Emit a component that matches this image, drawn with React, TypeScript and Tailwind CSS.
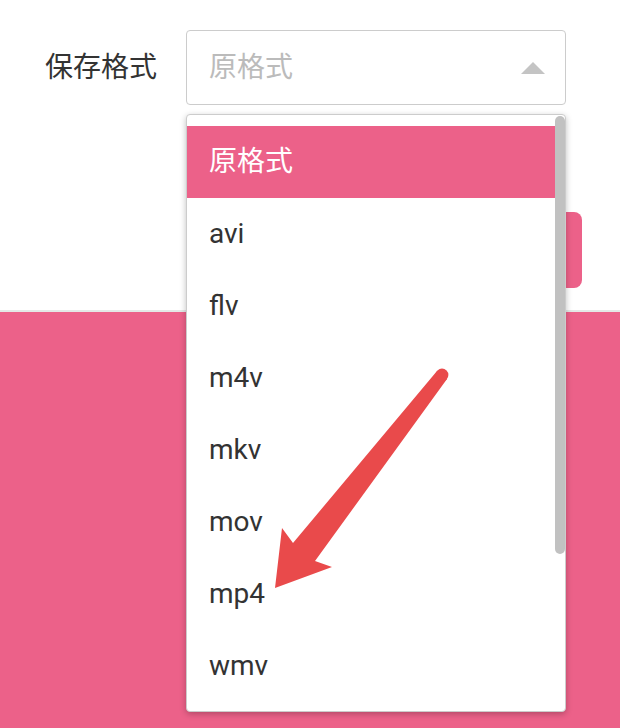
import React from "react";

const items = ["原格式", "avi", "flv", "m4v", "mkv", "mov", "mp4", "wmv"];

export default function App() {
  return (
    <div
      className="relative w-[620px] h-[728px] overflow-hidden bg-[#ec6189]"
      style={{ fontFamily: 'Roboto, "Noto Sans CJK SC", sans-serif' }}
    >
      <div className="h-[312px] bg-white border-b-2 border-[#e4e9e7] pt-[30px]">
        <div className="flex items-center pl-[45px]">
          <div className="w-[141px] text-[28px] leading-none text-[#333333]">保存格式</div>
          <div className="w-[380px] h-[75px] border-[1.5px] border-[#cccccc] rounded-[4px] flex items-center justify-between pl-[22px] pr-[20px]">
            <span className="text-[28px] leading-none text-[#bbbbbb]">原格式</span>
            <span className="w-0 h-0 border-l-[12px] border-r-[12px] border-b-[12px] border-l-transparent border-r-transparent border-b-[#c4c4c4]" />
          </div>
        </div>
        <div className="ml-[186px] mt-[107px] w-[396px] h-[76px] rounded-[8px] bg-[#ec6189]" />
      </div>

      <div className="absolute left-[186px] top-[114px] w-[380px] h-[598px] bg-white border border-[#cccccc] rounded-[4px] shadow-[0_2px_6px_rgba(0,0,0,0.25)] flex overflow-hidden">
        <div className="flex-1 pt-[11px]">
          {items.map((it, i) => (
            <div
              key={it}
              className={
                i === 0
                  ? "h-[72px] flex items-center pl-[22px] text-[28px] leading-none bg-[#ec6189] text-white"
                  : "h-[72px] flex items-center pl-[22px] text-[28px] leading-none text-[#333333]"
              }
            >
              {it}
            </div>
          ))}
        </div>
        <div className="w-[10px] pt-[1px]">
          <div className="w-[10px] h-[438px] rounded-full bg-[#c1c1c1]" />
        </div>
      </div>

      <svg className="absolute left-0 top-0" width="620" height="728" viewBox="0 0 620 728">
        <path
          d="M275 588 L282 528 L293 543 L437 371 L447 379 L315 561 L332 567 Z"
          fill="#e94a4b"
          strokeLinejoin="round"
        />
        <circle cx="442" cy="375" r="6.4" fill="#e94a4b" />
      </svg>
    </div>
  );
}
